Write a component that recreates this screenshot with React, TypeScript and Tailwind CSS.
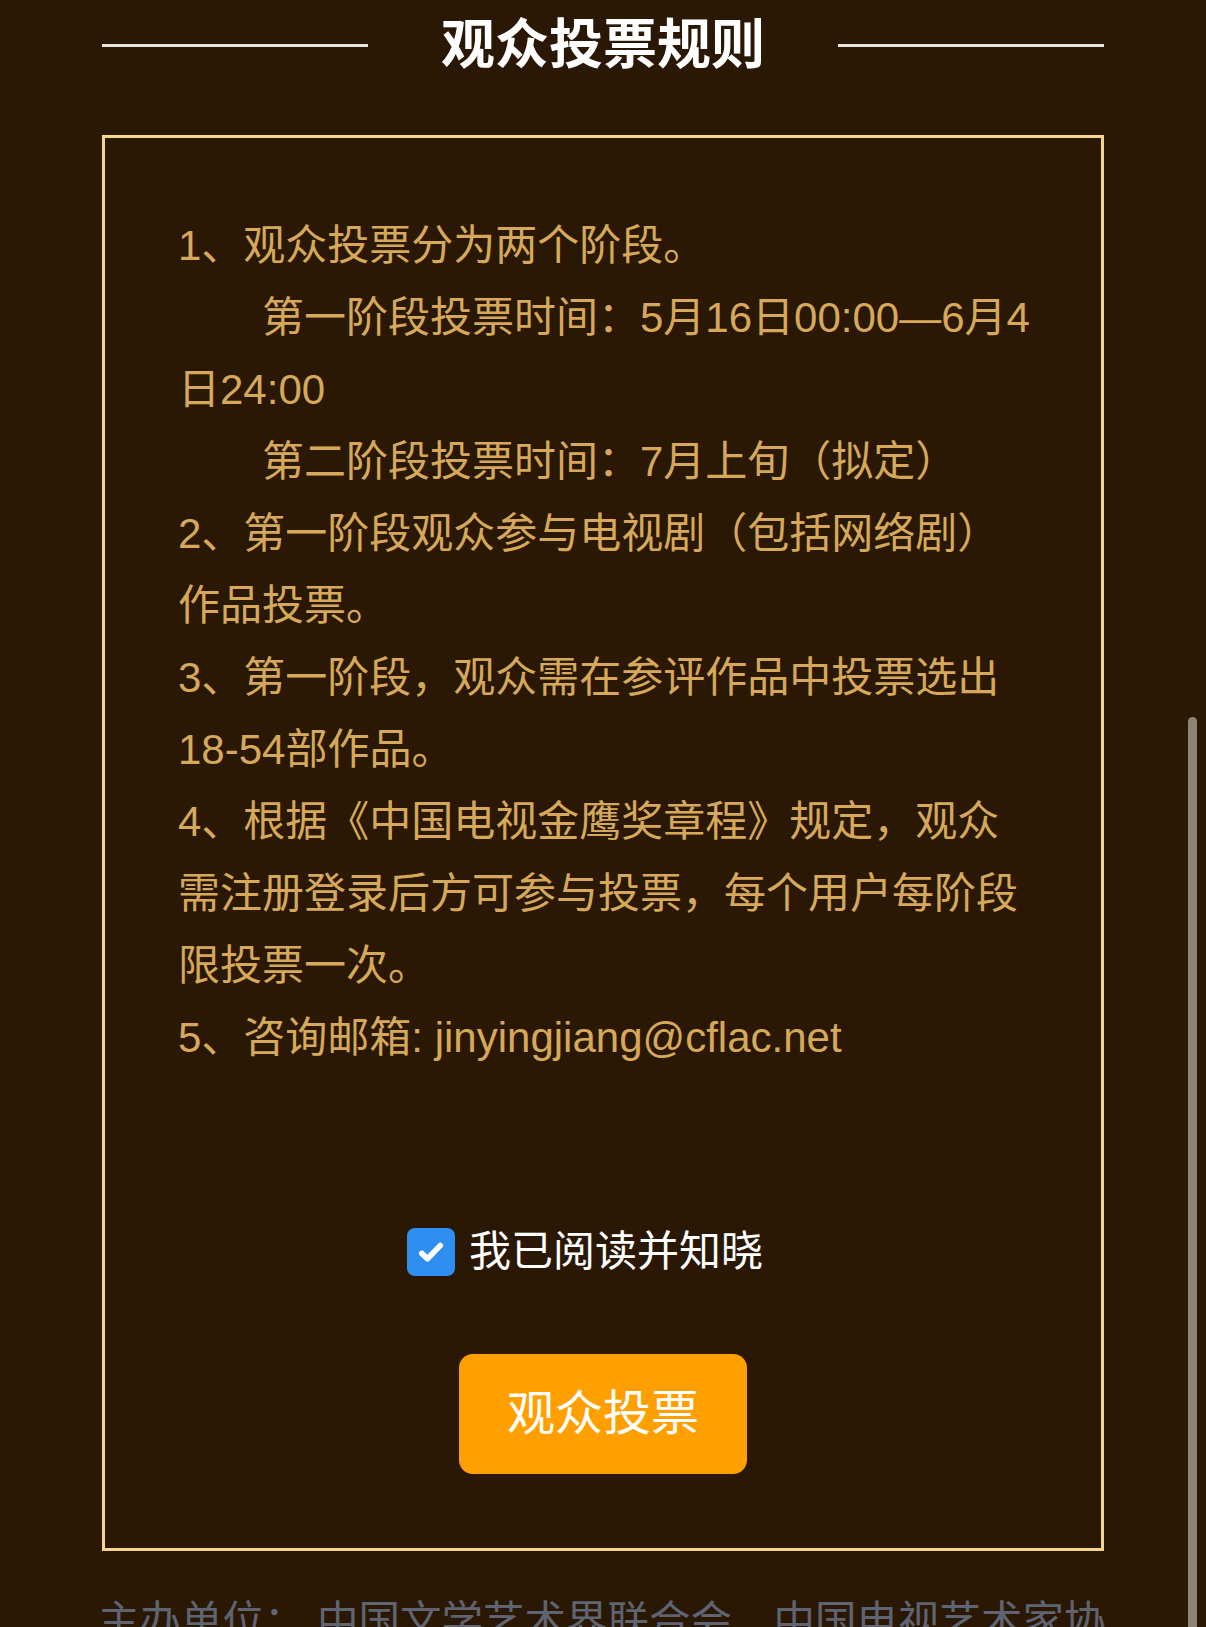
import React, { useState } from 'react';

const font = "font-['Liberation_Sans','Noto_Sans_CJK_SC',sans-serif]";

const rules: { text: string; indent?: boolean }[] = [
  { text: '1、观众投票分为两个阶段。' },
  { text: '第一阶段投票时间：5月16日00:00—6月4日24:00', indent: true },
  { text: '第二阶段投票时间：7月上旬（拟定）', indent: true },
  { text: '2、第一阶段观众参与电视剧（包括网络剧）作品投票。' },
  { text: '3、第一阶段，观众需在参评作品中投票选出18-54部作品。' },
  { text: '4、根据《中国电视金鹰奖章程》规定，观众需注册登录后方可参与投票，每个用户每阶段限投票一次。' },
  { text: '5、咨询邮箱: jinyingjiang@cflac.net' },
];

export default function App() {
  const [agreed, setAgreed] = useState(true);

  return (
    <div className={`relative h-[1627px] w-full overflow-hidden bg-[#2a1805] ${font}`}>
      {/* title */}
      <div className="flex h-[90px] items-center justify-between px-[102px]">
        <div className="h-[3px] w-[266px] bg-[#e9e5df]" />
        <h1 className="text-[54px] font-bold leading-none text-white">观众投票规则</h1>
        <div className="h-[3px] w-[266px] bg-[#e9e5df]" />
      </div>

      <div className="px-[102px]">
        {/* rules box */}
        <div className="mt-[45px] border-[3px] border-[#f4d58d] pb-[74px] pl-[73px] pr-[67px] pt-[72px]">
          <div className="text-[42px] leading-[72px] text-[#d6a95a]">
            {rules.map((r, i) => (
              <p key={i} className={r.indent ? 'indent-[84px]' : ''}>
                {r.text}
              </p>
            ))}
          </div>

          <label className="mt-[154px] flex cursor-pointer items-center justify-center pr-[42px]">
            <button
              onClick={() => setAgreed(!agreed)}
              className={`flex h-[48px] w-[48px] items-center justify-center rounded-[8px] ${
                agreed ? 'bg-[#2f8ff0]' : 'border-2 border-gray-400 bg-white'
              }`}
            >
              {agreed && (
                <svg viewBox="0 0 24 24" className="h-[34px] w-[34px]" fill="none">
                  <path d="M5.5 13l4 3.8L18.5 7.5" stroke="white" strokeWidth="4" strokeLinecap="round" strokeLinejoin="round" />
                </svg>
              )}
            </button>
            <span className="ml-[14px] text-[42px] leading-[48px] text-white">我已阅读并知晓</span>
          </label>

          <div className="mt-[78px] flex justify-center pr-[6px]">
            <button className="h-[120px] w-[288px] rounded-[14px] bg-[#ff9f00] text-[48px] text-white">
              观众投票
            </button>
          </div>
        </div>
      </div>

      {/* footer */}
      <div className="mt-[41px] pl-[98px] pr-[80px] text-[41.5px] leading-[60px] text-[#5e6472]">
        主办单位： 中国文学艺术界联合会　中国电视艺术家协会　中国电视艺术委员会
      </div>

      {/* overlay scrollbar */}
      <div className="absolute right-[9px] top-[717px] h-[940px] w-[9px] rounded-full bg-[#8d8475]" />
    </div>
  );
}
